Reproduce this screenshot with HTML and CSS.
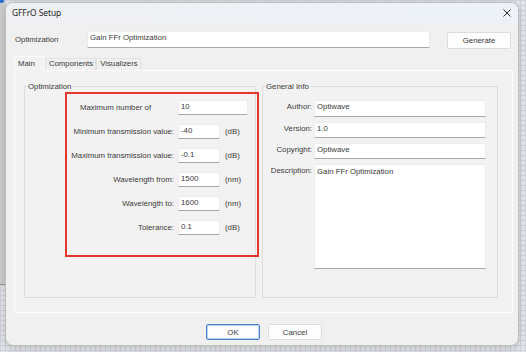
FILE: index.html
```html
<!DOCTYPE html>
<html lang="en">
<head>
    <meta charset="UTF-8">
    <meta name="viewport" content="width=device-width, initial-scale=1.0">
    <title>GFFrO Setup</title>
    <link rel="stylesheet" href="styles.css">
</head>
<body>
    <div class="dialog">
        <div class="titlebar">
            <span class="title">GFFrO Setup</span>
            <svg class="close-icon" width="8" height="8" viewBox="0 0 8 8">
                <path d="M0.5 0.5 L7.5 7.5 M7.5 0.5 L0.5 7.5" stroke="#2a2a2a" stroke-width="1" fill="none"/>
            </svg>
        </div>

        <!-- Name row -->
        <div class="name-row">
            <span class="name-label">Optimization</span>
            <input type="text" class="text-box name-input" value="Gain FFr Optimization">
            <button class="btn generate-btn">Generate</button>
        </div>

        <!-- Tabs -->
        <div class="tab-container">
            <div class="tab active">Main</div>
            <div class="tab">Components</div>
            <div class="tab">Visualizers</div>
        </div>

        <div class="tab-panel">
            <fieldset class="group opt-group">
                <legend>Optimization</legend>
                <div class="highlight">
                    <div class="row">
                        <span class="row-label left">Maximum number of</span>
                        <input type="text" class="text-box opt-input wide" value="10">
                    </div>
                    <div class="row">
                        <span class="row-label">Minimum transmission value:</span>
                        <input type="text" class="text-box opt-input" value="-40">
                        <span class="unit">(dB)</span>
                    </div>
                    <div class="row">
                        <span class="row-label">Maximum transmission value:</span>
                        <input type="text" class="text-box opt-input" value="-0.1">
                        <span class="unit">(dB)</span>
                    </div>
                    <div class="row">
                        <span class="row-label">Wavelength from:</span>
                        <input type="text" class="text-box opt-input" value="1500">
                        <span class="unit">(nm)</span>
                    </div>
                    <div class="row">
                        <span class="row-label">Wavelength to:</span>
                        <input type="text" class="text-box opt-input" value="1600">
                        <span class="unit">(nm)</span>
                    </div>
                    <div class="row last">
                        <span class="row-label">Tolerance:</span>
                        <input type="text" class="text-box opt-input" value="0.1">
                        <span class="unit">(dB)</span>
                    </div>
                </div>
            </fieldset>

            <fieldset class="group info-group">
                <legend>General Info</legend>
                <div class="info">
                    <div class="info-row">
                        <span class="info-label">Author:</span>
                        <input type="text" class="text-box info-input" value="Optiwave">
                    </div>
                    <div class="info-row">
                        <span class="info-label">Version:</span>
                        <input type="text" class="text-box info-input short" value="1.0">
                    </div>
                    <div class="info-row">
                        <span class="info-label">Copyright:</span>
                        <input type="text" class="text-box info-input short" value="Optiwave">
                    </div>
                    <div class="info-row">
                        <span class="info-label">Description:</span>
                        <textarea class="text-box description">Gain FFr Optimization</textarea>
                    </div>
                </div>
            </fieldset>
        </div>

        <div class="button-row">
            <button class="btn ok-btn">OK</button>
            <button class="btn">Cancel</button>
        </div>
    </div>
</body>
</html>
```

FILE: styles.css
```css
* {
    box-sizing: border-box;
}

body {
    margin: 0;
    padding: 2px 0 0 5px;
    height: 352px;
    overflow: hidden;
    font-family: "Liberation Sans", Arial, sans-serif;
    font-size: 7.8px;
    color: #3a3a3a;
    background-color: #e4e6eb;
    background-image:
        radial-gradient(circle at 1px 0, #2f6fd0 3px, transparent 3.5px),
        linear-gradient(#cdcdcd, #cdcdcd),
        linear-gradient(#9c9c9c, #9c9c9c),
        linear-gradient(to right, #cfd2da 1px, transparent 1px),
        linear-gradient(to bottom, #cfd2da 1px, transparent 1px);
    background-size: 8px 6px, 5px 284px, 5px 1px, 5px 5px, 5px 5px;
    background-position: 0 0, 0 0, 0 284px, 0 0, 0 0;
    background-repeat: no-repeat, no-repeat, no-repeat, repeat, repeat;
}

.dialog {
    width: 514px;
    height: 344px;
    background-color: #f0f0f0;
    border: 1px solid #bdbdbd;
    border-radius: 8px;
    box-shadow: 0 2px 8px rgba(0, 0, 0, 0.18);
    overflow: hidden;
}

.titlebar {
    height: 20px;
    display: flex;
    align-items: center;
    justify-content: space-between;
    padding: 0 7px 1px 6px;
    background: linear-gradient(to right, #eff0f3, #edf2fa);
}

.title {
    font-family: "Noto Sans", sans-serif;
    font-size: 8.3px;
    color: #1a1a1a;
}

.name-row {
    display: flex;
    align-items: flex-start;
    margin-top: 8px;
    padding-left: 9px;
}

.name-label {
    width: 72px;
    line-height: 17px;
}

.text-box {
    font-family: "Liberation Sans", Arial, sans-serif;
    font-size: 7.8px;
    color: #3a3a3a;
    background-color: #fff;
    border: 1px solid #ececec;
    border-bottom-color: #a9a9a9;
    border-radius: 1px;
    padding: 0 2px 3px;
    margin: 0;
    outline: none;
}

.name-input {
    width: 343px;
    height: 17px;
    padding-bottom: 5px;
}

.btn {
    font-family: "Liberation Sans", Arial, sans-serif;
    font-size: 7.8px;
    color: #3a3a3a;
    background-color: #fdfdfd;
    border: 1px solid #dcdcdc;
    border-radius: 2px;
    padding: 0;
    width: 54px;
    height: 16px;
}

.generate-btn {
    width: 64px;
    height: 17px;
    margin: 1px 0 0 17px;
}

.tab-container {
    display: flex;
    align-items: flex-end;
    height: 15px;
    margin: 6px 0 0 8px;
}

.tab {
    height: 12px;
    line-height: 10px;
    padding: 0 2px 0 3px;
    border: 1px solid #e2e2e2;
    border-bottom: none;
}

.tab.active {
    height: 15px;
    line-height: 14px;
    padding-right: 9px;
    background-color: #f2f2f2;
    border-color: #fbfbfb;
    margin-bottom: -1px;
    position: relative;
}

.tab-panel {
    display: flex;
    gap: 6px;
    width: 499px;
    height: 243px;
    margin-left: 8px;
    padding: 11px 0 0 9px;
    background-color: #f2f2f2;
    border: 1px solid #fdfdfd;
}

.group {
    margin: 0;
    padding: 0;
    min-width: 0;
    height: 216px;
    border: 1px solid #dddddd;
    border-radius: 1px;
}

.group legend {
    padding: 0 1px;
    margin-left: 2px;
    line-height: 9px;
}

.opt-group {
    width: 232px;
}

.info-group {
    width: 236px;
}

.highlight {
    width: 194px;
    height: 165px;
    margin: 1px 0 0 40px;
    padding-top: 6px;
    border: 2px solid #e6352c;
}

.row {
    display: flex;
    align-items: center;
    height: 15px;
    margin-bottom: 9px;
}

.row.last {
    margin-top: 1px;
}

.row-label {
    width: 107px;
    flex-shrink: 0;
    text-align: right;
}

.row-label.left {
    text-align: left;
    padding-left: 13px;
}

.opt-input {
    width: 42px;
    height: 15px;
    margin-left: 4px;
}

.opt-input.wide {
    width: 70px;
}

.unit {
    margin-left: 5px;
}

.info {
    padding-top: 9px;
}

.info-row {
    display: flex;
    align-items: flex-start;
    margin-bottom: 5px;
}

.info-label {
    width: 49px;
    flex-shrink: 0;
    text-align: right;
    line-height: 9px;
    padding-top: 2px;
}

.info-input {
    width: 172px;
    height: 17px;
    margin-left: 2px;
    padding-bottom: 5px;
}

.info-input.short {
    height: 16px;
    padding-bottom: 4px;
}

.description {
    width: 172px;
    height: 105px;
    margin-left: 2px;
    padding: 2px;
    resize: none;
    line-height: 9px;
}

.button-row {
    display: flex;
    justify-content: center;
    gap: 8px;
    margin-top: 11px;
    padding-left: 4px;
}

.ok-btn {
    border-color: #4a86cf;
    box-shadow: inset 0 0 0 1px #b9d1ee;
}
```
